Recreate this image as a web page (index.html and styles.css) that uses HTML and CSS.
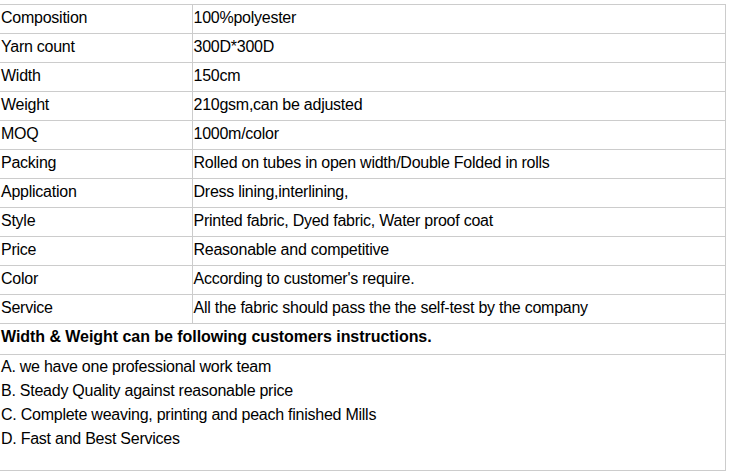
FILE: index.html
```html
<!DOCTYPE html>
<html>
<head>
<meta charset="utf-8">
<link rel="stylesheet" href="styles.css">
</head>
<body>
<table class="spec">
<colgroup><col class="c1"><col class="c2"></colgroup>
<tbody>
<tr><td>Composition</td><td>100%polyester</td></tr>
<tr><td>Yarn count</td><td>300D*300D</td></tr>
<tr><td>Width</td><td>150cm</td></tr>
<tr><td>Weight</td><td>210gsm,can be adjusted</td></tr>
<tr><td>MOQ</td><td>1000m/color</td></tr>
<tr><td>Packing</td><td>Rolled on tubes in open width/Double Folded in rolls</td></tr>
<tr><td>Application</td><td>Dress lining,interlining,</td></tr>
<tr><td>Style</td><td>Printed fabric, Dyed fabric, Water proof coat</td></tr>
<tr><td>Price</td><td>Reasonable and competitive</td></tr>
<tr><td>Color</td><td>According to customer's require.</td></tr>
<tr><td>Service</td><td>All the fabric should pass the the self-test by the company</td></tr>
<tr><td colspan="2" class="note">Width &amp; Weight can be following customers instructions.</td></tr>
<tr><td colspan="2" class="list">
<div class="line">A. we have one professional work team</div>
<div class="line">B. Steady Quality against reasonable price</div>
<div class="line">C. Complete weaving, printing and peach finished Mills</div>
<div class="line">D. Fast and Best Services</div>
</td></tr>
</tbody>
</table>
</body>
</html>
```
FILE: styles.css
```css
html, body {
  margin: 0;
  padding: 0;
  background: #fff;
}
body {
  padding-top: 4px;
  font-family: "Liberation Sans", Arial, sans-serif;
  font-size: 16px;
  color: #000;
}
.spec {
  border-collapse: collapse;
  table-layout: fixed;
  width: 726px;
}
.c1 { width: 192px; }
.spec td {
  border: 1px solid #cccccc;
  padding: 4px 1px 6px 1px;
  line-height: 18px;
  vertical-align: top;
  white-space: nowrap;
  letter-spacing: -0.25px;
}
.spec tr td:first-child {
  border-left: none;
}
.spec td.note {
  font-weight: bold;
  padding-bottom: 8px;
  letter-spacing: -0.05px;
}
.spec td.list {
  padding: 0 1px 19px 1px;
  line-height: 24px;
}
```
